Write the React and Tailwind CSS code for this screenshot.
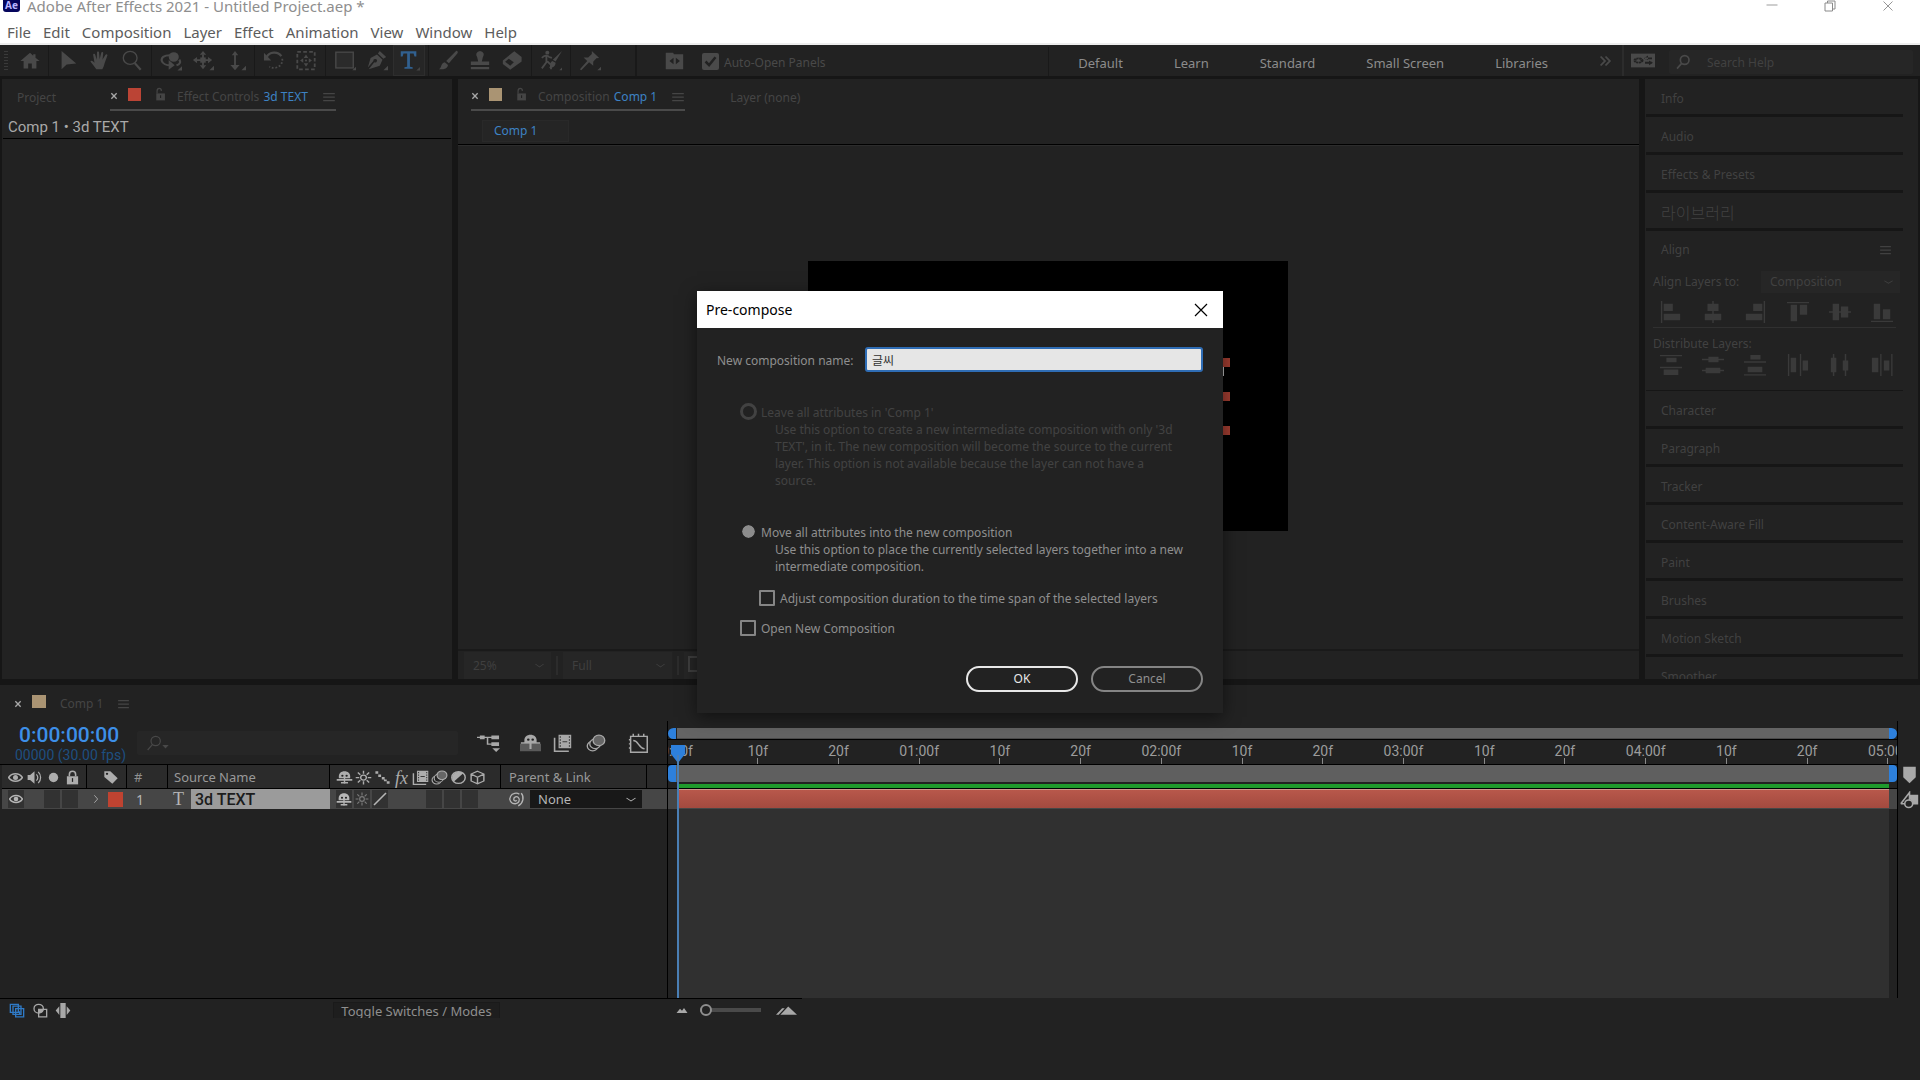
import React, { useState } from 'react';

const MENUS = ['File', 'Edit', 'Composition', 'Layer', 'Effect', 'Animation', 'View', 'Window', 'Help'];

const TOP_PANELS = ['Info', 'Audio', 'Effects & Presets', '라이브러리'];
const BOTTOM_PANELS = ['Character', 'Paragraph', 'Tracker', 'Content-Aware Fill', 'Paint', 'Brushes', 'Motion Sketch', 'Smoother'];

const RULER = ['0:00f', '10f', '20f', '01:00f', '10f', '20f', '02:00f', '10f', '20f', '03:00f', '10f', '20f', '04:00f', '10f', '20f', '05:00f'];

// Drawings, all on a 24 x 24 grid
const ICONS = {
  home: <path d="M12 2 1.500 12H5v9h5v-6h4v6h5v-9h3.500L18 8V4h-2.500v1.700z" />,
  select: <path d="M5 1v21l5.500-5.500L21 15.500z" />,
  hand: <path d="M8 22c-2-3-4-6-6.500-9 1-1.500 2.500-.8 4.500 1.500L4.500 5.500c0-1.500 2-1.700 2.300-.2L8.500 11 8.700 3c0-1.600 2.300-1.600 2.300 0l.6 7.500 1.700-7.200c.3-1.500 2.400-1.200 2.200.4L14.700 11l3.300-5.500c.8-1.300 2.600-.4 2 1L17 15c-.5 3-1.500 5-2.500 7z" />,
  zoom: <g fill="none" stroke="currentColor"><circle cx="10" cy="9" r="7.500" strokeWidth="1.500" /><path d="m15 15 6.500 7.500" strokeWidth="2.500" /></g>,
  orbit: <><circle cx="15" cy="8" r="5.500" /><path d="M11 6c-7 0-10 3-9 6.500.8 3 5 5 9.500 5M21 11c2 3 .5 5.500-3 6.500" fill="none" stroke="currentColor" strokeWidth="2.400" /><path d="M9.500 11.500v11l6.500-5z" /><path d="M24 18.500v5h-5z" /></>,
  pan: <><path d="M12 1l3.500 4.500h-7zM12 22l3.500-4.500h-7zM1 11.500 5.500 8v7zM22 11.500 17.500 8v7z" /><path d="M11 5h2v13h-2zM5 10.500h14v2H5z" /><path d="M9 8.500h6v6H9z" /><path d="M24 18v5h-5z" /></>,
  dolly: <><path d="M12 1l3.500 5H13v11h4l-5 6-5-6h4V6H8.500z" /><path d="M24 18v5h-5z" /></>,
  rotate: <><path d="M4 8C7 2 16 1 20 7" fill="none" stroke="currentColor" strokeWidth="2.500" /><path d="M1 3v9h8z" /><path d="M21 10c1 8-7 13-14 9" fill="none" stroke="currentColor" strokeWidth="2" strokeDasharray="2 2" /></>,
  anchor: <><rect x="2.500" y="2" width="19" height="20" fill="none" stroke="currentColor" strokeWidth="2" strokeDasharray="4 2.500" /><path d="M12 5l2.500 4h-5zM12 19l2.500-4h-5zM5.500 12 9 9.500v5zM18.500 12 15 9.500v5z" /><circle cx="12" cy="12" r="1.200" /></>,
  rect: <><rect x="2" y="2.500" width="19" height="18" fillOpacity=".25" stroke="currentColor" strokeWidth="1.500" /><path d="M24 19v4h-4z" /></>,
  pen: <><path d="M15 1l7 7-3 2-6-6zM12 5l6 6-3 7-12 4 6-8a2 2 0 1 0-1-1.500L2 20 5 9z" /><path d="M24 18v5h-5z" /></>,
  type: <><path d="M3 1.500h17v6h-2L17 4h-4v15l3 .8V21.500H7V19.800L10 19V4H6L5 7.500H3z" /><path d="M24.500 19v4.500H20z" fill="#454545" /></>,
  brush: <path d="M22 1c1.200 1 .8 2-.3 3.500L13 15l-3-2.500L20 2c.7-.8 1.300-1.300 2-1zM8.500 14l3.500 3c-.5 4-4.500 5.500-10 5 3-1 2-7 6.500-8z" />,
  stamp: <path d="M12 1a4.500 4.500 0 0 1 3 7.500L14 13h8v4H2v-4h8L9 8.500A4.500 4.500 0 0 1 12 1zM2 19.500h20V22H2z" />,
  eraser: <><path d="M14.500 1.500 22.500 8v5L10 22.500 2 16v-4z" /><path d="m4.500 13.500 4-3.500 5.500 4-4 4z" fill="#222" /></>,
  roto: <><circle cx="8" cy="3" r="2.200" /><path d="M2 9c3-3 6-3.500 8-1l3 1M7 7v7l-5 7M8 13l4 4v5" fill="none" stroke="currentColor" strokeWidth="2" /><path d="M24 1 17 13l-3-2zM13.500 12.500l3.500 2c0 4-3 6-7 6 2-2 0-6 3.500-8zM25 19v4h-4z" /></>,
  pin: <><path d="M14 1l8 8-3 .5-3.500 4V18L11 14l-8.500 9L1 22l8-9.500L5 8.500h5l4-4z" /><path d="M24 19v4h-4z" /></>,
  panels: <><path d="M3 2h8l1 2h10v18H3z" /><path d="M11.500 8v8l-4.500-4zM14 8v8l4.500-4z" fill="#222" /></>,
  check: <path d="m5 12 5 5 9-11" fill="none" stroke="#222" strokeWidth="3.500" />,
  workspace: <><path d="M0 1h24v22H0z" /><circle cx="7.500" cy="12" r="3.500" fill="none" stroke="#222" strokeWidth="3" strokeDasharray="2.200 .6" /><path d="M14 7h7v3h-7zM14 14h7v3h-7zM17 4l-4 4.500 4 3zM18 12l4 3.500-4 4z" fill="#222" /></>,
  search: <g fill="none" stroke="currentColor" strokeWidth="2.500"><circle cx="14.500" cy="9" r="6.500" /><path d="m10 14-7 8" /></g>,
  searchThin: <g fill="none" stroke="currentColor" strokeWidth="1.800"><circle cx="14.500" cy="9" r="7" /><path d="m9.500 14.500-7 8" /></g>,
  caret: <path d="M1 5h22L12 21z" />,
  lock: <><path d="M6 11h16v12H6z" /><path d="M6.500 11V7a4 4.500 0 0 1 8 0" fill="none" stroke="currentColor" strokeWidth="2.200" transform="translate(1 0)" /><path d="M13 14h2v5h-2z" fill="#222" /></>,
  burger: <path d="M2 4h20v2.400H2zM2 11h20v2.400H2zM2 18h20v2.400H2z" />,
  eye: <><path d="M1 12C6 4 18 4 23 12 18 20 6 20 1 12z" fill="none" stroke="currentColor" strokeWidth="2.500" /><circle cx="12" cy="12" r="4" /></>,
  audio: <><path d="M1 8h4l7-6v20l-7-6H1z" /><path d="M15 7c3 3 3 7 0 10M18 3c5 5 5 13 0 18" fill="none" stroke="currentColor" strokeWidth="2" /></>,
  dot: <circle cx="12" cy="12" r="7.500" />,
  locked: <><path d="M3 10h18v13H3z" /><path d="M7 10V7a5 5 0 0 1 10 0v3" fill="none" stroke="currentColor" strokeWidth="2.500" /><path d="M11 13h2v6h-2z" fill="#222" /></>,
  tag: <><path d="M2 2h9l11 11-8 9L2 11z" /><circle cx="6" cy="6" r="1.800" fill="#222" /></>,
  shy: <><path d="M12 2c5 0 8 3.500 8 8v3H4v-3c0-4.500 3-8 8-8z" /><path d="M11 11h2v11h-2zM1 14.500h22V17H1zM7 19h10v2.500H7z" /><circle cx="9" cy="9" r="1.600" fill="#222" /><circle cx="15" cy="9" r="1.600" fill="#222" /></>,
  sun: <><circle cx="12" cy="12" r="4" fill="none" stroke="currentColor" strokeWidth="2" /><path d="M12 1v5M12 18v5M1 12h5M18 12h5M4 4l3.500 3.500M16.500 16.500 20 20M20 4l-3.500 3.500M7.500 16.500 4 20" stroke="currentColor" strokeWidth="2" /></>,
  quality: <path d="M2 2h4v4H2zM6 7h4v4H6zM11 11h4v4h-4zM14 15h4v3h-4zM18 18h4v4h-4z" />,
  slash: <path d="M3 21 21 3" stroke="currentColor" strokeWidth="2.500" />,
  frames: <><path d="M7 1h16v18H7zM3 5v17h17v2H1V5z" /><path d="M12 9.500h6v1.500h-6zM8.500 3H10v2H8.500zM8.500 7H10v2H8.500zM8.500 11H10v2H8.500zM8.500 15H10v2H8.500zM20 3h1.500v2H20zM20 7h1.500v2H20zM20 11h1.500v2H20zM20 15h1.500v2H20z" fill="#3a3a3a" /></>,
  motion: <g stroke="currentColor" strokeWidth="1.600" fill="#222"><circle cx="8" cy="16" r="6.500" /><circle cx="11" cy="13" r="6.500" /><circle cx="15.500" cy="8.500" r="7" fill="#666" /></g>,
  adjust: <><circle cx="12" cy="12" r="9.500" fill="none" stroke="currentColor" strokeWidth="2" /><path d="M18.700 5.300 5.300 18.700A9.500 9.500 0 0 1 18.700 5.300z" /></>,
  cube: <path d="M12 2l9 4.500v11L12 22l-9-4.500v-11zM3 6.500l9 5 9-5M12 11.500V22" fill="none" stroke="currentColor" strokeWidth="2" />,
  flow: <><path d="M3 2h5v5H3zM15 2h8v5h-8zM15 11h8v5h-8z" /><path d="M0 4.500h16M11 4.500v9h5" fill="none" stroke="currentColor" strokeWidth="1.600" /><path d="M16 19h8l-4 5z" /></>,
  hideShy: <><path d="M0 13h24v10H0z" fill="#5a5a5a" /><path d="M12 1c4 0 7 3 7 7v3H5V8c0-4 3-7 7-7zM1 11h22v2H1zM10.800 11h2.400v9h-2.400z" /><circle cx="9.500" cy="7.500" r="1.500" fill="#222" /><circle cx="14.500" cy="7.500" r="1.500" fill="#222" /></>,
  graph: <g fill="none" stroke="currentColor" strokeWidth="1.700"><path d="M3 4h19v19H3zM6 1v3M12 1v3M18 1v3M1 8h2M1 13h2M1 18h2" /><path d="M6 9c6 0 6 9 13 10" /></g>,
  pickwhip: <path d="M13 13c-1 2-4 1-4-1.500C9 8 13 7 15 9c3 3 1 9-4 9-6 0-9-6-6-11C7 3 13 2 16.500 4.500M19 3c4 5 3 14-4 18" fill="none" stroke="currentColor" strokeWidth="1.800" />,
  layers: <g fill="#222" stroke="currentColor" strokeWidth="2"><path d="M2 2h12v13H2zM6 5h12v13H6zM10 9h12v13H10z" /><path d="M16 13v5" /></g>,
  modes: <><circle cx="10" cy="9" r="7" fill="none" stroke="currentColor" strokeWidth="2" /><path d="M10 10h12v12H10z" fill="none" stroke="currentColor" strokeWidth="2" /><path d="M10 10h7c0 4-3 7-7 6z" /></>,
  inout: <path d="M8 0h8v24H8zM6.500 5v14L1 12zM17.500 5v14l5.500-7z" />,
  marker: <path d="M2 1h20v14L12 23 2 15z" />,
  comp: <><path d="M11 5h12v13H15z" /><path d="M1 17 12 2v12M1 17h9" fill="none" stroke="currentColor" strokeWidth="2" /><circle cx="11" cy="17" r="5" fill="#222" stroke="currentColor" strokeWidth="2" /></>,
  hillSmall: <path d="M1 19 8 9l4 5 4-7 7 12z" />,
  hillBig: <path d="M0 21 7 7h3L3 21zM5 21 14 3l10 18z" />,
  chevron: <path d="m3 8 9 8 9-8" fill="none" stroke="currentColor" strokeWidth="2.200" />,
  twirl: <path d="m8 3 8 9-8 9" fill="none" stroke="currentColor" strokeWidth="2" />,
  more: <path d="m3 3 8 9-8 9M12 3l8 9-8 9" fill="none" stroke="currentColor" strokeWidth="3.500" />,
  cross: <path d="m3 3 18 18M21 3 3 21" fill="none" stroke="currentColor" strokeWidth="1.800" />,
  crossBold: <path d="m4 4 16 16M20 4 4 20" fill="none" stroke="currentColor" strokeWidth="4" />,
  minimize: <path d="M1 11h22v2H1z" />,
  restore: <path d="M2 6h15v16H2zM7 6V2h15v16h-5" fill="none" stroke="currentColor" strokeWidth="2" />,
  alignLeft: <path d="M1 0h1.500v24H1zM4 3h10v8H4zM4 14h18v7H4z" />,
  alignCenter: <path d="M11.200 0h1.600v24h-1.600zM6 3h12v8H6zM3 14h18v7H3z" />,
  alignRight: <path d="M21.500 0H23v24h-1.500zM10 3h10v8H10zM2 14h18v7H2z" />,
  alignTop: <path d="M0 1h24v1.500H0zM4 4h7v18H4zM14 4h8v11h-8z" />,
  alignMiddle: <path d="M0 11.200h24v1.600H0zM4 3h7v18H4zM13 6h8v12h-8z" />,
  alignBottom: <path d="M0 21.500h24V23H0zM3 3h7v17H3zM13 9h8v11h-8z" />,
  distTop: <path d="M0 1h24v1.500H0zM7 4h11v5H7zM0 14h24v1.500H0zM4 17h16v6H4z" />,
  distMiddle: <path d="M0 5.200h24v1.600H0zM7 3h11v6H7zM0 17.200h24v1.600H0zM4 15h16v6H4z" />,
  distBottom: <path d="M7 1h11v5H7zM0 8h24v1.500H0zM4 14h16v6H4zM0 22h24v1.500H0z" />,
  distLeft: <path d="M1 0h1.500v24H1zM4 4h6v16H4zM14 0h1.500v24H14zM17 7h6v11h-6z" />,
  distCenter: <path d="M4.200 0h1.600v24H4.200zM2 4h6v16H2zM17.200 0h1.600v24h-1.600zM15 7h6v11h-6z" />,
  distRight: <path d="M10 0h1.500v24H10zM1 4h7v16H1zM22 0h1.500v24H22zM14 7h6v11h-6z" />,
};

const Icon = ({ name, className = 'w-4 h-4' }) => (
  <svg viewBox="0 0 24 24" fill="currentColor" preserveAspectRatio="none" aria-hidden="true" className={`shrink-0 ${className}`}>
    {ICONS[name]}
  </svg>
);

const IconButton = ({ name, label, className = '', iconClass }) => (
  <button type="button" aria-label={label} className={`flex items-center justify-center ${className}`}>
    <Icon name={name} className={iconClass} />
  </button>
);

const TitleBar = () => (
  <header className="h-[45px] shrink-0 overflow-hidden bg-white border-b-2 border-[#ededed]">
    <div className="flex items-start justify-between h-[20px]">
      <div className="flex items-start pl-[3px]">
        <span className="flex items-end justify-center w-[17px] h-[12px] rounded-b-[3px] bg-[#05055c] text-[#b9b4ff] text-[10px] leading-[14px] font-bold">Ae</span>
        <h1 className="ml-[7px] -mt-1 text-[15px] leading-5 text-[#8e8e8e]">Adobe After Effects 2021 - Untitled Project.aep *</h1>
      </div>
      <div className="flex items-start gap-[46px] pr-[26px] text-[#8a8a8a]">
        <IconButton name="minimize" label="Minimize" iconClass="w-3 h-[10px]" />
        <IconButton name="restore" label="Restore" iconClass="w-3 h-3" />
        <IconButton name="cross" label="Close" iconClass="w-3 h-3" />
      </div>
    </div>
    <nav className="flex gap-[12px] pl-[7px] text-[15px] leading-6 text-[#5c5c5c]">
      {MENUS.map((menu) => (
        <button key={menu} type="button">{menu}</button>
      ))}
    </nav>
  </header>
);

const TOOL_GROUPS = [
  ['select', 'hand', 'zoom'],
  ['orbit', 'pan', 'dolly'],
  ['rotate', 'anchor'],
  ['rect', 'pen', 'type'],
  ['brush', 'stamp', 'eraser'],
  ['roto'],
  ['pin'],
];

const Toolbar = () => (
  <div className="flex items-stretch h-[34px] shrink-0 bg-[#222] border-b-[3px] border-[#161616] text-[#494949] text-[12px]">
    <div className="w-[4px] ml-1 my-1.5 bg-[repeating-linear-gradient(#3a3a3a_0_1px,transparent_1px_3px)]" />
    <IconButton name="home" label="Home" className="w-10 pl-1" iconClass="w-[22px] h-[20px]" />
    {TOOL_GROUPS.map((group) => (
      <div key={group[0]} className="flex px-[3px] border-l border-[#191919]">
        {group.map((tool) => (
          <IconButton
            key={tool}
            name={tool}
            label={tool}
            className={tool === 'type' ? 'w-8 bg-[#262626] border border-[#2e2e2e] text-[#31608f]' : 'w-8'}
            iconClass="w-[22px] h-[21px]"
          />
        ))}
      </div>
    ))}
    <div className="ml-[26px] border-l-2 border-[#191919]" />
    <IconButton name="panels" label="Panels" className="ml-[26px]" iconClass="w-[22px] h-[20px]" />
    <label className="flex items-center gap-[5px] ml-[17px] pt-0.5">
      <span className="grid *:[grid-area:1/1]">
        <input type="checkbox" defaultChecked className="peer appearance-none w-[17px] h-[17px] rounded-[2px] bg-[#4a4a4a]" />
        <Icon name="check" className="w-[17px] h-[17px] pointer-events-none invisible peer-checked:visible" />
      </span>
      <span className="pt-0.5">Auto-Open Panels</span>
    </label>
    <div className="ml-auto mt-0.5 flex items-center gap-[51px] pl-[29px] pr-[51px] border-l border-[#191919] text-[13px] text-[#8c8c8c]">
      {['Default', 'Learn', 'Standard', 'Small Screen', 'Libraries'].map((name) => (
        <button key={name} type="button" className="pt-1">{name}</button>
      ))}
    </div>
    <IconButton name="more" label="More workspaces" iconClass="w-[13px] h-[12px]" />
    <div className="ml-[10px] border-l-2 border-[#2c2c2c]" />
    <IconButton name="workspace" label="Workspace settings" className="ml-[7px]" iconClass="w-[24px] h-[15px]" />
    <label className="flex items-center gap-[16px] w-[244px] h-6 ml-[14px] mr-[7px] mt-[5px] pl-[6px] rounded-[2px] bg-[#262626]">
      <Icon name="search" className="w-4 h-4" />
      <input type="text" placeholder="Search Help" aria-label="Search Help" className="w-40 pt-0.5 bg-transparent outline-none placeholder:text-[#414141]" />
    </label>
  </div>
);

const PanelTab = ({ colour, title, target }) => (
  <div className="flex items-center h-8 border-b-2 border-[#4a4a4a] text-[12px] text-[#454545]">
    <button type="button" aria-label="Close tab" className="pt-1 text-[#a8a8a8]"><Icon name="crossBold" className="w-[8px] h-[8px]" /></button>
    <span className={`w-[13px] h-[13px] ml-[10px] ${colour}`} />
    <Icon name="lock" className="w-[13px] h-[14px] ml-[12px]" />
    <span className="ml-[11px] pt-1.5">{title} <span className="ml-px text-[#3d82c4]">{target}</span></span>
    <Icon name="burger" className="w-[14px] h-[12px] ml-[14px] mt-1.5" />
  </div>
);

const EffectControls = () => (
  <section className="flex flex-col w-[450px] shrink-0 bg-[#222]">
    <div className="flex items-start">
      <button type="button" className="w-[108px] h-9 pt-0.5 pl-[15px] text-left text-[12px] text-[#454545]">Project</button>
      <PanelTab colour="bg-[#bb4435]" title="Effect Controls" target="3d TEXT" />
    </div>
    <p className="h-[28px] -mt-1 mx-px pt-1 pl-[5px] border-b border-black font-['Roboto',sans-serif] text-[15px] leading-6 text-[#a9a9a9]">Comp 1 • 3d TEXT</p>
  </section>
);

// Selection handles of the text layer, in composition space
const HANDLES = ['top-[97px]', 'top-[131px]', 'top-[165px]'];

const FooterSelect = ({ label, value, className }) => (
  <label className={`flex items-center bg-[#262626] pl-[9px] pr-[6px] ${className}`}>
    <select aria-label={label} className="appearance-none grow outline-none">
      <option>{value}</option>
    </select>
    <Icon name="chevron" className="w-[11px] h-[9px]" />
  </label>
);

const Composition = () => (
  <section className="flex flex-col grow min-w-0 bg-[#222]">
    <div className="flex items-start pl-[13px]">
      <PanelTab colour="bg-[#aa9473]" title="Composition" target="Comp 1" />
      <button type="button" className="h-9 ml-[45px] pt-0.5 text-[12px] text-[#454545]">Layer (none)</button>
    </div>
    <div className="h-[34px] -mt-1 pt-[6px] pl-6 border-b border-black">
      <button type="button" className="w-[87px] h-[22px] pl-[11px] text-left bg-[#252525] border border-[#292929] text-[12px] leading-5 text-[#3d82c4]">Comp 1</button>
    </div>
    <div className="grow flex items-center justify-center border-t border-[#2c2c2c] pr-px pb-1">
      <div className="relative w-[480px] h-[270px] bg-black">
        {HANDLES.map((top) => (
          <span key={top} className={`absolute left-[414px] w-[8px] h-[9px] bg-[#a03d31] ${top}`} />
        ))}
        <span className="absolute left-[414px] top-[106px] w-[2px] h-[9px] bg-[#bbb]" />
      </div>
    </div>
    <div className="flex h-[30px] pt-px pl-[6px] border-t-2 border-[#1a1a1a] text-[12px] text-[#3f3f3f]">
      <FooterSelect label="Magnification" value="25%" className="w-[87px]" />
      <div className="w-[2px] mx-[5px] my-1 bg-[#2c2c2c]" />
      <FooterSelect label="Resolution" value="Full" className="w-[109px]" />
      <div className="w-[2px] mx-[5px] my-1 bg-[#2c2c2c]" />
      <div className="w-6 bg-[#262626] p-1"><div className="w-4 h-4 border-2 border-[#3f3f3f]" /></div>
    </div>
  </section>
);

const PanelItem = ({ name, className = '' }) => (
  <button type="button" className={`block w-full h-[38px] pt-1 pl-[15px] text-left border-b-[3px] border-[#161616] ${className}`}>{name}</button>
);

const ALIGN = ['alignLeft', 'alignCenter', 'alignRight', 'alignTop', 'alignMiddle', 'alignBottom'];
const DISTRIBUTE = ['distTop', 'distMiddle', 'distBottom', 'distLeft', 'distCenter', 'distRight'];

const IconRow = ({ names }) => (
  <div className="flex justify-between pl-[7px] pr-[3px] text-[#3a3a3a]">
    {names.map((name) => (
      <IconButton key={name} name={name} label={name} iconClass="w-[22px] h-[22px]" />
    ))}
  </div>
);

const SidePanels = () => (
  <aside className="w-[273px] shrink-0 overflow-hidden bg-[#222] pl-px pr-[15px] text-[12px] text-[#414141]">
    {TOP_PANELS.map((name) => (
      <PanelItem key={name} name={name} className={name === '라이브러리' ? 'text-[16px] font-light' : ''} />
    ))}
    <div className="h-[160px] border-b border-[#161616]">
      <div className="flex items-center justify-between h-[38px] pl-[15px] pr-[11px]">
        <h2>Align</h2>
        <Icon name="burger" className="w-[13px] h-3" />
      </div>
      <div className="pl-[7px] pr-[3px]">
        <label className="flex items-center justify-between h-[25px] whitespace-nowrap">
          Align Layers to:
          <span className="flex items-center w-[139px] h-[22px] pl-[9px] pr-[6px] bg-[#262626]">
            <select className="appearance-none grow outline-none"><option>Composition</option></select>
            <Icon name="chevron" className="w-[11px] h-[8px]" />
          </span>
        </label>
        <div className="pt-[7px] pb-1 mr-1 border-b border-[#303030]"><IconRow names={ALIGN} /></div>
        <p className="h-[26px] pt-1.5 leading-5">Distribute Layers:</p>
        <div className="mr-1"><IconRow names={DISTRIBUTE} /></div>
      </div>
    </div>
    {BOTTOM_PANELS.map((name) => <PanelItem key={name} name={name} />)}
  </aside>
);

const TIMELINE_TOOLS = [
  { name: 'flow', label: 'Mini-flowchart', className: 'w-[42px]', iconClass: 'w-[23px] h-[18px]' },
  { name: 'hideShy', label: 'Hide shy layers', className: 'w-[42px]', iconClass: 'w-[21px] h-[18px]' },
  { name: 'frames', label: 'Frame blending', className: 'w-[23px]', iconClass: 'w-[19px] h-[18px]' },
  { name: 'motion', label: 'Motion blur', className: 'w-[43px]', iconClass: 'w-[20px] h-[18px]' },
  { name: 'graph', label: 'Graph editor', className: 'w-[42px]', iconClass: 'w-[21px] h-[20px]' },
];

const SWITCHES = ['shy', 'sun', 'quality', 'fx', 'frames', 'motion', 'adjust', 'cube'];

const ColumnHeader = () => (
  <div className="flex items-stretch h-[24px] ml-0.5 bg-[#2b2b2b] border-b border-black text-[#adadad]">
    <div className="flex w-[85px] px-1 border-r border-black">
      {['eye', 'audio', 'dot', 'locked'].map((name) => (
        <span key={name} className="flex grow items-center justify-center pt-0.5"><Icon name={name} className="w-[15px] h-[15px]" /></span>
      ))}
    </div>
    <div className="flex w-[40px] pt-0.5 pl-4 items-center border-r border-black"><Icon name="tag" className="w-[16px] h-[15px]" /></div>
    <div className="flex w-[41px] pt-0.5 pl-[7px] items-center border-r border-black text-[13px] text-[#8f8f8f]">#</div>
    <div className="flex w-[162px] pt-0.5 pl-[6px] items-center border-r border-black text-[13px] text-[#999]">Source Name</div>
    <div className="flex w-[171px] pt-0.5 pl-[5px] border-r border-black">
      {SWITCHES.map((name) => (
        <span key={name} className="flex w-[19px] items-center justify-center">
          {name === 'fx'
            ? <i className="font-['Liberation_Serif',serif] text-[18px] leading-5">fx</i>
            : <Icon name={name} className="w-[17px] h-[15px]" />}
        </span>
      ))}
    </div>
    <div className="flex w-[146px] pt-0.5 pl-2 items-center border-r border-black text-[13px] text-[#999]">Parent &amp; Link</div>
  </div>
);

const Cell = ({ children, className = 'bg-[#323232]' }) => (
  <span className={`flex w-[16px] mx-[1px] items-center justify-center ${className}`}>{children}</span>
);

const LayerRow = () => (
  <div className="flex items-stretch h-[20px] ml-0.5 bg-[#464646] text-[#b5b5b5]">
    <div className="flex w-[85px] px-[5px] py-px">
      <Cell><Icon name="eye" className="w-[14px] h-[14px]" /></Cell>
      <Cell className="" />
      <Cell />
      <Cell />
    </div>
    <div className="flex w-[40px] items-center">
      <IconButton name="twirl" label="Expand layer" className="ml-1" iconClass="w-[10px] h-[10px]" />
      <span className="w-[15px] h-[15px] ml-[7px] bg-[#bf4331]" />
    </div>
    <div className="flex w-[41px] pl-[9px] items-center text-[14px]">1</div>
    <div className="flex w-[162px]">
      <span className="w-[23px] pl-[5px] font-['Liberation_Serif',serif] text-[18px] leading-5">T</span>
      <span className="grow pl-1 bg-[#9b9b9b] font-['Roboto',sans-serif] font-medium text-[16px] leading-[22px] text-[#1c1c1c]">3d TEXT</span>
    </div>
    <div className="flex w-[171px] pl-[5px] py-px">
      <Cell><Icon name="shy" className="w-[16px] h-[15px]" /></Cell>
      <Cell><Icon name="sun" className="w-[14px] h-[14px] text-[#7a7a7a]" /></Cell>
      <Cell><Icon name="slash" className="w-[16px] h-[16px]" /></Cell>
      <Cell className="" />
      <Cell className="" />
      <Cell />
      <Cell />
      <Cell />
    </div>
    <div className="flex w-[146px] pl-[6px] items-center">
      <Icon name="pickwhip" className="w-[18px] h-[17px]" />
      <label className="flex items-center w-[112px] h-[18px] ml-[5px] pl-2 pr-[5px] bg-[#181818] text-[13px]">
        <select aria-label="Parent" className="appearance-none grow outline-none leading-[18px]"><option>None</option></select>
        <Icon name="chevron" className="w-[12px] h-[9px]" />
      </label>
    </div>
  </div>
);

const LayerColumns = () => (
  <div className="flex flex-col w-[668px] shrink-0 border-r border-black">
    <div className="flex h-[44px] items-center border-b border-black">
      <div className="w-[137px] pt-0.5 pl-[15px] font-['Roboto',sans-serif]">
        <div className="pl-1 text-[21px] leading-[22px] font-medium text-[#3d8fe8]">0:00:00:00</div>
        <div className="text-[14px] leading-[18px] text-[#1e4f80]">00000 (30.00 fps)</div>
      </div>
      <label className="flex items-center w-[321px] h-6 pl-[9px] rounded-[2px] bg-[#262626] text-[#484848]">
        <Icon name="searchThin" className="w-4 h-4" />
        <Icon name="caret" className="w-[7px] h-[5px] mt-2" />
        <input type="text" aria-label="Search layers" className="grow ml-1 bg-transparent outline-none" />
      </label>
      <div className="flex ml-[9px] text-[#a8a8a8]">
        {TIMELINE_TOOLS.map((tool) => <IconButton key={tool.name} {...tool} />)}
      </div>
    </div>
    <ColumnHeader />
    <LayerRow />
  </div>
);

const Tracks = () => (
  <div className="relative flex flex-col grow min-w-0 pt-[6px] border-r border-black">
    <div className="flex h-[12px] pt-px">
      <div className="w-2 rounded-l-full bg-[#2d80dc]" />
      <div className="grow ml-px bg-[#646464] border-b border-[#4a4a4a]" />
      <div className="w-2 rounded-r-full bg-[#2d80dc]" />
    </div>
    <div className="flex justify-between h-[26px] pl-[9px] pr-[9px] overflow-hidden border-y border-black bg-[#222] font-['Roboto',sans-serif] text-[14px] leading-[22px] text-[#9c9c9c]">
      {RULER.map((label, i) => (
        <div key={i} className="flex flex-col items-center w-0 whitespace-nowrap">
          <span className="h-[18px]">{label}</span>
          <span className="w-px h-[7px] bg-[#8a8a8a]" />
        </div>
      ))}
    </div>
    <div className="flex h-[19px] pb-0.5 bg-[#222]">
      <div className="w-[8px] rounded-l-[4px] bg-[#2d80dc]" />
      <div className="grow bg-[#5f5f5f]" />
      <div className="w-[8px] rounded-r-[4px] bg-[#2d80dc]" />
    </div>
    <div className="h-[5px] pl-[9px] pr-[8px] border-b border-black"><div className="h-1 bg-[#1f9a2c]" /></div>
    <div className="h-[20px] pl-[9px] pr-[8px] bg-[#464646]">
      <div className="h-[19px] bg-linear-to-b from-[#b8584b] to-[#a34a3f] border-t border-[#c9998f]" />
    </div>
    <div className="grow ml-[9px] mr-[8px] bg-[#303030]" />
    {/* current time indicator */}
    <div className="absolute left-[3px] top-[24px] bottom-0 flex flex-col items-center w-[14px]">
      <svg viewBox="0 0 12 18" preserveAspectRatio="none" className="w-[14px] h-[18px] shrink-0" fill="#2d80dc"><path d="M0 0h12v9l-6 9-6-9z" /></svg>
      <div className="w-[2px] grow -mt-2 bg-[#4a7fb5]" />
    </div>
  </div>
);

const Timeline = () => (
  <section className="flex flex-col grow-[333] basis-0 min-h-0 bg-[#222]">
    <div className="flex items-center h-9 shrink-0 pt-px pl-[14px] text-[12px] text-[#454545]">
      <button type="button" aria-label="Close tab" className="text-[#a8a8a8]"><Icon name="crossBold" className="w-[8px] h-[8px]" /></button>
      <span className="w-[14px] h-[13px] ml-[10px] mb-1 bg-[#aa9473]" />
      <button type="button" className="ml-[14px]">Comp 1</button>
      <Icon name="burger" className="w-[13px] h-[12px] ml-[14px]" />
    </div>
    <div className="flex grow min-h-0">
      <LayerColumns />
      <Tracks />
      <div className="flex flex-col items-center gap-[7px] w-[22px] pt-[45px] text-[#a8a8a8]">
        <Icon name="marker" className="w-[15px] h-[18px]" />
        <Icon name="comp" className="w-[19px] h-[18px]" />
      </div>
    </div>
    <div className="flex items-center h-[20px] shrink-0 w-[802px] border-t border-black overflow-hidden pt-[3px] pl-[9px] text-[#a8a8a8]">
      <div className="flex gap-[7px] w-[324px]">
        <IconButton name="layers" label="Layer switches" className="text-[#2f7ac6]" iconClass="w-[16px] h-[15px]" />
        <IconButton name="modes" label="Transfer controls" iconClass="w-[16px] h-[15px]" />
        <IconButton name="inout" label="In and out" iconClass="w-[16px] h-[15px]" />
      </div>
      <button type="button" className="w-[167px] h-[17px] bg-[#1e1e1e] border border-[#1a1a1a] text-[13px] leading-4 whitespace-nowrap text-[#8f8f8f]">Toggle Switches / Modes</button>
      <Icon name="hillSmall" className="w-[12px] h-[10px] ml-[176px]" />
      <input type="range" aria-label="Timeline zoom" defaultValue={0} className="appearance-none w-[61px] h-1 mx-[12px] bg-[#4a4a4a] [&::-webkit-slider-thumb]:appearance-none [&::-webkit-slider-thumb]:w-[12px] [&::-webkit-slider-thumb]:h-[12px] [&::-webkit-slider-thumb]:rounded-full [&::-webkit-slider-thumb]:bg-[#222] [&::-webkit-slider-thumb]:border-2 [&::-webkit-slider-thumb]:border-[#8f8f8f]" />
      <Icon name="hillBig" className="w-[21px] h-[11px] ml-[3px]" />
    </div>
  </section>
);

const Radio = ({ disabled, checked, onChange, children }) => (
  <label className={`flex items-start gap-[4px] leading-4 ${disabled ? 'text-[#424242]' : 'text-[#8f8f8f]'}`}>
    <input
      type="radio"
      name="mode"
      checked={checked}
      disabled={disabled}
      onChange={onChange}
      className="appearance-none shrink-0 w-[17px] h-[17px] -mt-0.5 rounded-full border-3 border-[#8c8c8c] disabled:border-[#424242] checked:bg-[#8c8c8c] checked:border-2 checked:border-[#222] checked:bg-clip-padding"
    />
    {children}
  </label>
);

const CheckBox = ({ children, className }) => (
  <label className={`flex items-center gap-[5px] h-[17px] leading-4 ${className}`}>
    <input type="checkbox" className="appearance-none shrink-0 w-4 h-4 border-2 border-[#858585] rounded-[1px] checked:bg-[#858585]" />
    <span className="pt-0.5">{children}</span>
  </label>
);

const PreComposeDialog = () => {
  const [name, setName] = useState('글씨');
  const [mode, setMode] = useState('move');

  return (
    <div role="dialog" aria-labelledby="dialog-title" className="w-[526px] h-[422px] bg-[#222] shadow-[0_4px_16px_rgba(0,0,0,0.5)] text-[12px] text-[#8f8f8f]">
      <div className="flex items-center justify-between h-[37px] pl-[9px] pr-[14px] bg-white text-black">
        <h2 id="dialog-title" className="text-[14px]">Pre-compose</h2>
        <IconButton name="cross" label="Close" iconClass="w-4 h-4" />
      </div>
      <form onSubmit={(e) => e.preventDefault()} className="pt-[19px] px-5">
        <div className="flex items-center justify-between h-[25px]">
          <label htmlFor="comp-name" className="pt-0.5">New composition name:</label>
          <input
            id="comp-name"
            type="text"
            value={name}
            onChange={(e) => setName(e.target.value)}
            className="w-[338px] h-[25px] px-[5px] rounded-[3px] bg-[#e6e6e6] border-2 border-[#2f6db5] text-[12px] text-[#333] outline-none"
          />
        </div>
        <div className="pt-[33px] pl-[23px]">
          <Radio disabled checked={mode === 'leave'} onChange={() => setMode('leave')}>Leave all attributes in &apos;Comp 1&apos;</Radio>
          <p className="w-[443px] pl-[35px] leading-[17px] text-[#424242]">
            Use this option to create a new intermediate composition with only &apos;3d TEXT&apos;, in it. The new composition will become the source to the current layer. This option is not available because the layer can not have a source.
          </p>
          <div className="pt-[36px]">
            <Radio checked={mode === 'move'} onChange={() => setMode('move')}>Move all attributes into the new composition</Radio>
          </div>
          <p className="pl-[35px] leading-[17px]">Use this option to place the currently selected layers together into a new intermediate composition.</p>
          <CheckBox className="mt-[14px] ml-[19px]">Adjust composition duration to the time span of the selected layers</CheckBox>
          <CheckBox className="mt-[13px]">Open New Composition</CheckBox>
        </div>
        <div className="flex justify-end gap-[13px] pt-[30px]">
          <button type="submit" className="w-[112px] h-[26px] rounded-full border-2 border-[#e8e8e8] text-[#e8e8e8] leading-5">OK</button>
          <button type="button" className="w-[112px] h-[26px] rounded-full border-2 border-[#858585] leading-5">Cancel</button>
        </div>
      </form>
    </div>
  );
};

const App = () => (
  <div className="relative flex flex-col h-screen overflow-hidden bg-[#161616] font-['Noto_Sans','Noto_Sans_CJK_KR',sans-serif]">
    <TitleBar />
    <Toolbar />
    <main className="flex grow-[600] basis-0 min-h-0 gap-[6px] px-[2px]">
      <EffectControls />
      <Composition />
      <SidePanels />
    </main>
    <div className="h-[6px] shrink-0" />
    <Timeline />
    <footer className="h-[62px] shrink-0 bg-[#222]" />
    <div className="absolute inset-x-0 top-[291px] flex justify-center">
      <PreComposeDialog />
    </div>
  </div>
);

export default App;
